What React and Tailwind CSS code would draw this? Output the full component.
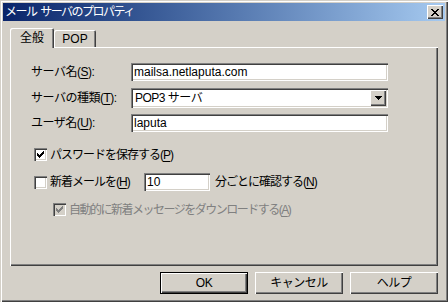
import React from 'react';

const raised = 'shadow-[inset_1px_1px_#ffffff,inset_-1px_-1px_#404040,inset_-2px_-2px_#808080]';
const sunken = 'shadow-[inset_1px_1px_#808080,inset_2px_2px_#404040,inset_-1px_-1px_#ffffff,inset_-2px_-2px_#d4d0c8]';

function Mn({ children }) {
  return <span className="underline underline-offset-2">{children}</span>;
}

function Check({ checked, disabled }) {
  return (
    <div className={`w-[13px] h-[13px] shrink-0 flex items-center justify-center ${sunken} ${disabled ? 'bg-[#d4d0c8]' : 'bg-white'}`}>
      {checked && (
        <svg width="7" height="7" viewBox="0 0 7 7" shapeRendering="crispEdges" fill={disabled ? '#808080' : '#000'}>
          <path d="M6 0h1v1h-1zM5 1h2v1h-2zM0 2h1v1h-1zM4 2h3v1h-3zM0 3h2v1h-2zM3 3h3v1h-3zM0 4h5v1h-5zM1 5h3v1h-3zM2 6h1v1h-1z" />
        </svg>
      )}
    </div>
  );
}

function Field({ value, className = '' }) {
  return (
    <div className={`h-[18px] bg-white ${sunken} flex items-center pl-[3px] text-[12px] leading-none text-black tracking-normal ${className}`}>
      {value}
    </div>
  );
}

function Button({ children, primary }) {
  return (
    <div className={`w-[88px] h-[22px] ${primary ? 'border border-black' : ''}`}>
      <div className={`w-full h-full bg-[#d4d0c8] ${raised} flex items-center justify-center text-[12px] leading-none text-black tracking-[-0.5px]`}>
        {children}
      </div>
    </div>
  );
}

export default function App() {
  return (
    <div className="w-[448px] h-[302px] bg-[#d4d0c8] font-['Liberation_Sans','Noto_Sans_CJK_JP',sans-serif] p-[3px] flex flex-col shadow-[inset_1px_1px_#d4d0c8,inset_2px_2px_#ffffff,inset_-1px_-1px_#404040,inset_-2px_-2px_#808080] overflow-hidden">
      {/* title bar */}
      <div className="h-[18px] shrink-0 bg-gradient-to-r from-[#0a246a] to-[#a6caf0] flex items-center justify-between pl-[2px] pr-[2px]">
        <span className="text-white text-[12px] leading-none tracking-[-1.5px]">メール&nbsp;&nbsp;サーバのプロパティ</span>
        <div className={`w-[16px] h-[14px] bg-[#d4d0c8] ${raised} flex items-center justify-center`}>
          <svg width="8" height="7" viewBox="0 0 8 7" shapeRendering="crispEdges" fill="#000">
            <path d="M0 0h2v1h-2zM6 0h2v1h-2zM1 1h2v1h-2zM5 1h2v1h-2zM2 2h4v1h-4zM3 3h2v1h-2zM2 4h4v1h-4zM1 5h2v1h-2zM5 5h2v1h-2zM0 6h2v1h-2zM6 6h2v1h-2z" />
          </svg>
        </div>
      </div>

      <div className="flex-1 flex flex-col pt-[7px] px-[7px]">
        {/* tabs */}
        <div className="flex items-end h-[19px] shrink-0">
          <div className="relative z-10 w-[44px] h-[20px] -mb-px bg-[#d4d0c8] rounded-t-[2px] shadow-[inset_1px_1px_#ffffff,inset_-1px_0_#404040,inset_-2px_0_#808080] flex items-center justify-center text-[12px] leading-none text-black">
            全般
          </div>
          <div className="w-[42px] h-[17px] bg-[#d4d0c8] rounded-t-[2px] shadow-[inset_1px_1px_#ffffff,inset_-1px_0_#404040,inset_-2px_0_#808080] flex items-center justify-center text-[12px] leading-none text-black">
            POP
          </div>
        </div>

        {/* panel */}
        <div className="h-[219px] shrink-0 shadow-[inset_1px_1px_#ffffff,inset_-1px_-1px_#404040,inset_-2px_-2px_#808080] pt-[16px] pl-[21px] text-[12px] leading-none text-black">
          <div className="flex flex-col gap-[7px]">
            <div className="flex items-center h-[18px]">
              <span className="w-[100px] tracking-[-0.5px]">サーバ名(<Mn>S</Mn>):</span>
              <Field value="mailsa.netlaputa.com" className="w-[257px]" />
            </div>
            <div className="flex items-center h-[20px]">
              <span className="w-[100px] tracking-[-0.5px]">サーバの種類(<Mn>T</Mn>):</span>
              <div className={`w-[257px] h-[20px] bg-white ${sunken} flex items-center justify-between p-[2px]`}>
                <span className="pl-[2px] tracking-[-0.5px]">POP3 サーバ</span>
                <div className={`w-[16px] h-[16px] bg-[#d4d0c8] ${raised} flex items-center justify-center`}>
                  <svg width="7" height="4" viewBox="0 0 7 4" shapeRendering="crispEdges" fill="#000">
                    <path d="M0 0h7v1h-7zM1 1h5v1h-5zM2 2h3v1h-3zM3 3h1v1h-1z" />
                  </svg>
                </div>
              </div>
            </div>
            <div className="flex items-center h-[18px] -mt-px">
              <span className="w-[100px] tracking-[-0.5px]">ユーザ名(<Mn>U</Mn>):</span>
              <Field value="laputa" className="w-[257px]" />
            </div>
          </div>

          <div className="flex items-center gap-[3px] ml-[3px] mt-[16px] h-[13px]">
            <Check checked />
            <span className="tracking-[-1px]">パスワードを保存する(<Mn>P</Mn>)</span>
          </div>

          <div className="flex items-center ml-[3px] mt-[12px] h-[18px]">
            <Check />
            <span className="w-[97px] pl-[3px] tracking-[-1px]">新着メールを(<Mn>H</Mn>)</span>
            <Field value="10" className="w-[66px]" />
            <span className="pl-[5px] tracking-[-1px]">分ごとに確認する(<Mn>N</Mn>)</span>
          </div>

          <div className="flex items-center gap-[3px] ml-[22px] mt-[12px] h-[13px] text-[#808080]">
            <Check checked disabled />
            <span className="tracking-[-1.5px]">自動的に新着メッセージをダウンロードする(<Mn>A</Mn>)</span>
          </div>
        </div>

        {/* buttons */}
        <div className="flex justify-end gap-[7px] mt-[6px]">
          <Button primary>OK</Button>
          <Button>キャンセル</Button>
          <Button>ヘルプ</Button>
        </div>
      </div>
    </div>
  );
}
